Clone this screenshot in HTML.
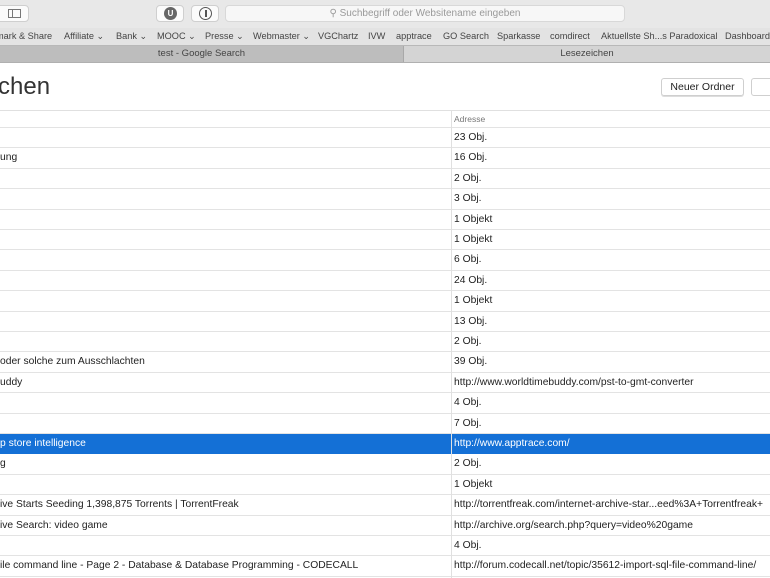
<!DOCTYPE html><html><head><style>
body{margin:0;width:770px;height:578px;overflow:hidden;font-family:"Liberation Sans",sans-serif;background:#fff;position:relative}
.a{position:absolute}
.tb{left:0;top:0;width:770px;height:28px;background:#e8e8e8}
.btn{background:#fbfbfb;border:1px solid #cfcfcf;border-radius:4px;height:17px;top:5px;box-sizing:border-box}
.bm{left:0;top:28px;width:770px;height:17px;background:#e3e3e3;font-size:9.2px;color:#444;white-space:nowrap}
.bm span{position:absolute;top:3px}
.tabs{left:0;top:45px;width:770px;height:18px;background:#c4c4c4;border-top:1px solid #b8b8b8;border-bottom:1px solid #b0b0b0;box-sizing:border-box;font-size:9.5px;color:#444}
.row{position:absolute;left:0;width:770px;height:20.4px;border-bottom:1px solid #e3e3e3;box-sizing:border-box;font-size:10.3px;color:#222}
.row span{position:absolute;top:4px;white-space:nowrap}
.row .c2{left:454px}
.div{position:absolute;left:451px;top:111px;width:1px;height:467px;background:#e0e0e0}
.sel{background:#1470d6;color:#fff;border-bottom-color:#1470d6}
</style></head><body>
<div class="a tb"></div>
<div class="a btn" style="left:-4px;width:33px"><div class="a" style="left:11px;top:3px;width:13px;height:9px;border:1px solid #777;box-sizing:border-box"></div><div class="a" style="left:15px;top:3px;width:1px;height:9px;background:#777"></div></div>
<div class="a btn" style="left:156px;width:28px"><div class="a" style="left:7px;top:1px;width:13px;height:13px;border-radius:50%;background:#666;color:#fff;font-size:8px;font-weight:bold;text-align:center;line-height:13px">U</div></div>
<div class="a btn" style="left:191px;width:28px"><div class="a" style="left:7px;top:1px;width:11px;height:11px;border-radius:50%;border:1.5px solid #555;"></div><div class="a" style="left:13px;top:4px;width:2px;height:7px;background:#555"></div></div>
<div class="a btn" style="left:225px;width:400px;background:#f7f7f7;border-color:#d8d8d8;font-size:10px;color:#999;text-align:center;line-height:15px">&#9906; Suchbegriff oder Websitename eingeben</div>
<div class="a bm">
<span style="left:-4px">mark &amp; Share</span><span style="left:64px">Affiliate ⌄</span><span style="left:116px">Bank ⌄</span><span style="left:157px">MOOC ⌄</span><span style="left:205px">Presse ⌄</span><span style="left:253px">Webmaster ⌄</span><span style="left:318px">VGChartz</span><span style="left:368px">IVW</span><span style="left:396px">apptrace</span><span style="left:443px">GO Search</span><span style="left:497px">Sparkasse</span><span style="left:550px">comdirect</span><span style="left:601px">Aktuellste Sh...s Paradoxical</span><span style="left:725px">Dashboard</span>
</div>
<div class="a tabs"><div class="a" style="left:0;top:0;width:403px;height:16px;background:#bdbdbd;border-right:1px solid #a8a8a8;text-align:center;line-height:16px">test - Google Search</div><div class="a" style="left:404px;top:0;width:366px;height:16px;background:#d4d4d4;text-align:center;line-height:16px">Lesezeichen</div></div>
<div class="a" style="left:-2px;top:73px;font-size:24px;color:#333">chen</div>
<div class="a" style="left:661px;top:78px;width:83px;height:18px;border:1px solid #cfcfcf;border-radius:3px;box-sizing:border-box;font-size:10.5px;text-align:center;line-height:16px;color:#222;box-shadow:0 1px 0 #ddd">Neuer Ordner</div>
<div class="a" style="left:751px;top:78px;width:30px;height:18px;border:1px solid #cfcfcf;border-radius:3px;box-sizing:border-box"></div>
<div class="a" style="left:0;top:110px;width:770px;height:1px;background:#e0e0e0"></div>
<div class="row" style="top:111px;height:17px;font-size:8.5px;color:#777"><span class="c2" style="top:3px">Adresse</span></div>
<div class="row" style="top:128px"><span class="c2">23 Obj.</span></div>
<div class="row" style="top:148.4px"><span>ung</span><span class="c2">16 Obj.</span></div>
<div class="row" style="top:168.8px"><span class="c2">2 Obj.</span></div>
<div class="row" style="top:189.2px"><span class="c2">3 Obj.</span></div>
<div class="row" style="top:209.6px"><span class="c2">1 Objekt</span></div>
<div class="row" style="top:230px"><span class="c2">1 Objekt</span></div>
<div class="row" style="top:250.4px"><span class="c2">6 Obj.</span></div>
<div class="row" style="top:270.8px"><span class="c2">24 Obj.</span></div>
<div class="row" style="top:291.2px"><span class="c2">1 Objekt</span></div>
<div class="row" style="top:311.6px"><span class="c2">13 Obj.</span></div>
<div class="row" style="top:332px"><span class="c2">2 Obj.</span></div>
<div class="row" style="top:352.4px"><span>oder solche zum Ausschlachten</span><span class="c2">39 Obj.</span></div>
<div class="row" style="top:372.8px"><span>uddy</span><span class="c2">http://www.worldtimebuddy.com/pst-to-gmt-converter</span></div>
<div class="row" style="top:393.2px"><span class="c2">4 Obj.</span></div>
<div class="row" style="top:413.6px"><span class="c2">7 Obj.</span></div>
<div class="row sel" style="top:434px"><span>p store intelligence</span><span class="c2">http://www.apptrace.com/</span></div>
<div class="row" style="top:454.4px"><span>g</span><span class="c2">2 Obj.</span></div>
<div class="row" style="top:474.8px"><span class="c2">1 Objekt</span></div>
<div class="row" style="top:495.2px"><span>ive Starts Seeding 1,398,875 Torrents | TorrentFreak</span><span class="c2">http://torrentfreak.com/internet-archive-star...eed%3A+Torrentfreak+</span></div>
<div class="row" style="top:515.6px"><span>ive Search: video game</span><span class="c2">http://archive.org/search.php?query=video%20game</span></div>
<div class="row" style="top:536px"><span class="c2">4 Obj.</span></div>
<div class="row" style="top:556.4px"><span>ile command line - Page 2 - Database &amp; Database Programming - CODECALL</span><span class="c2">http://forum.codecall.net/topic/35612-import-sql-file-command-line/</span></div>
<div class="div"></div>
</body></html>
